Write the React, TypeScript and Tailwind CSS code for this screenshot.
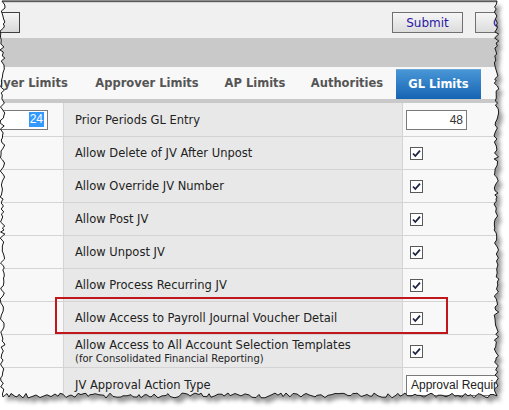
import React from "react";

const rows = [
  { label: "Allow Delete of JV After Unpost" },
  { label: "Allow Override JV Number" },
  { label: "Allow Post JV" },
  { label: "Allow Unpost JV" },
  { label: "Allow Process Recurring JV" },
  { label: "Allow Access to Payroll Journal Voucher Detail" },
];

function Check() {
  return (
    <div className="w-[13px] h-[13px] border border-[#5a5a5a] bg-white flex items-center justify-center">
      <svg width="11" height="11" viewBox="0 0 11 11">
        <path d="M2 5.5 L4.3 8 L9 2.6" fill="none" stroke="#1c2340" strokeWidth="1.8" />
      </svg>
    </div>
  );
}

// jagged torn-paper edge, computed once
function tornPath() {
  let seed = 7;
  const rnd = () => {
    seed = (seed * 9301 + 49297) % 233280;
    return seed / 233280;
  };
  const pts: [number, number][] = [];
  pts.push([2, 1]);
  pts.push([497, 1]);
  for (let y = 4; y < 394; y += 2 + Math.floor(rnd() * 3)) {
    pts.push([494 + rnd() * 5, y]);
  }
  for (let x = 497; x > 2; x -= 2 + Math.floor(rnd() * 3)) {
    pts.push([x, 393 + rnd() * 5]);
  }
  for (let y = 394; y > 2; y -= 2 + Math.floor(rnd() * 3)) {
    pts.push([rnd() * 5, y]);
  }
  return "M" + pts.map((p) => p[0].toFixed(1) + " " + p[1].toFixed(1)).join(" L") + " Z";
}

const edge = tornPath();

const arial = { fontFamily: "Arial, 'Liberation Sans', sans-serif" };

export default function App() {
  const font = { fontFamily: '"DejaVu Sans", Verdana, sans-serif' };
  return (
    <div className="relative w-[509px] h-[410px] bg-white overflow-hidden" style={font}>
      <div className="w-[500px] h-[400px] overflow-hidden">
        {/* top app bar */}
        <div className="h-[1px] bg-[#444]" />
        <div className="h-[1px] bg-[#9a9a9a]" />
        <div className="h-[1px] bg-[#d4d4d4]" />
        <div className="h-[35px] bg-[#f0f0f0] flex items-start pt-[9px]">
          <div className="shrink-0 ml-[-20px] w-[40px] h-[21px] border border-[#404040] bg-gradient-to-b from-[#f6f6f6] to-[#d8d8d8]" />
          <div className="shrink-0 ml-[372px] w-[71px] h-[21px] border border-[#707070] bg-gradient-to-b from-[#f6f6f6] to-[#dcdcdc] flex items-center justify-center text-[12px] text-[#2a17a5]">
            Submit
          </div>
          <div className="shrink-0 ml-[12px] w-[80px] h-[21px] border border-[#707070] bg-gradient-to-b from-[#f6f6f6] to-[#dcdcdc] flex items-center pl-[17px] text-[12px] text-[#2a17a5]">
            Cancel
          </div>
        </div>
        <div className="h-[29px] bg-[#c8c9c8]" />

        {/* tabs */}
        <div className="h-[32px] bg-[#f8f8f8] flex items-end text-[11.5px] font-bold text-[#555]">
          <div className="ml-[-28px] w-[110px] shrink-0 h-[30px] flex items-center justify-center whitespace-nowrap">Buyer Limits</div>
          <div className="w-[130px] shrink-0 h-[30px] flex items-center justify-center">Approver Limits</div>
          <div className="w-[86px] shrink-0 h-[30px] flex items-center justify-center">AP Limits</div>
          <div className="w-[98px] shrink-0 h-[30px] flex items-center justify-center">Authorities</div>
          <div className="w-[85px] shrink-0 h-[30px] flex items-center justify-center text-white bg-gradient-to-b from-[#4896d6] to-[#1464b4] border-t border-[#6aa8dc]">
            GL Limits
          </div>
        </div>
        <div className="h-[4px] bg-[#c8c9c8]" />

        {/* grid rows */}
        <div className="text-[11.5px] text-[#222]">
          <div className="flex h-[33px]">
            <div className="shrink-0 w-[64px] bg-[#f8f8f8] border-r border-[#d4d4d4] flex items-center">
              <div className="ml-[-10px] w-[58px] h-[20px] border border-[#7a7a7a] bg-white flex items-center justify-end pr-[3px]">
                <span className="bg-[#3399ff] text-white text-[12px] leading-[15px] px-[1px]" style={arial}>
                  24
                </span>
              </div>
            </div>
            <div className="shrink-0 w-[339px] bg-[#e8e8e8] border-r border-[#d4d4d4] flex items-center pl-[11px] pt-[2px]">
              Prior Periods GL Entry
            </div>
            <div className="flex-1 bg-[#f8f8f8] flex items-center pl-[3px] pt-[1px]">
              <div
                className="w-[61px] h-[20px] border border-[#7a7a7a] bg-white flex items-center justify-end pr-[3px] text-[12px] text-[#333]"
                style={arial}
              >
                48
              </div>
            </div>
          </div>

          {rows.map((r) => (
            <div key={r.label} className="flex h-[33px] border-t border-[#d4d4d4]">
              <div className="shrink-0 w-[64px] bg-[#f8f8f8] border-r border-[#d4d4d4]" />
              <div className="shrink-0 w-[339px] bg-[#e8e8e8] border-r border-[#d4d4d4] flex items-center pl-[11px] pt-[2px]">
                {r.label}
              </div>
              <div className="flex-1 bg-[#f8f8f8] flex items-center pl-[7px] pt-[1px]">
                <Check />
              </div>
            </div>
          ))}

          <div className="flex h-[33px] border-t border-[#d4d4d4]">
            <div className="shrink-0 w-[64px] bg-[#f8f8f8] border-r border-[#d4d4d4]" />
            <div className="shrink-0 w-[339px] bg-[#e8e8e8] border-r border-[#d4d4d4] flex flex-col justify-center pl-[11px] pt-[2px] leading-[13px]">
              <div>Allow Access to All Account Selection Templates</div>
              <div className="text-[10px] leading-[13px]">(for Consolidated Financial Reporting)</div>
            </div>
            <div className="flex-1 bg-[#f8f8f8] flex items-center pl-[7px] pt-[1px]">
              <Check />
            </div>
          </div>

          <div className="flex h-[33px] border-t border-[#d4d4d4]">
            <div className="shrink-0 w-[64px] bg-[#f8f8f8] border-r border-[#d4d4d4]" />
            <div className="shrink-0 w-[339px] bg-[#e8e8e8] border-r border-[#d4d4d4] flex items-center pl-[11px] pt-[4px]">
              JV Approval Action Type
            </div>
            <div className="flex-1 min-w-0 bg-[#f8f8f8] flex items-center pl-[3px] pt-[2px]">
              <div
                className="w-[120px] shrink-0 h-[21px] border border-[#7a7a7a] bg-white flex items-center pl-[4px] text-[12px] text-[#222] whitespace-nowrap"
                style={arial}
              >
                Approval Required
              </div>
            </div>
          </div>
        </div>
      </div>

      {/* highlight annotation */}
      <div className="absolute left-[55px] top-[297px] w-[393px] h-[37px] border-2 border-[#c0161c]" />

      {/* torn edge overlay */}
      <svg className="absolute inset-0" width="509" height="410" viewBox="0 0 509 410">
        <defs>
          <filter id="blur" x="-10%" y="-10%" width="120%" height="120%">
            <feGaussianBlur stdDeviation="2.2" />
          </filter>
          <mask id="outside">
            <rect width="509" height="410" fill="white" />
            <path d={edge} fill="black" />
          </mask>
        </defs>
        <path d={"M0 0 H509 V410 H0 Z " + edge} fill="white" fillRule="evenodd" />
        <g mask="url(#outside)">
          <path d={edge} transform="translate(4 5)" fill="#000" opacity="0.4" filter="url(#blur)" />
        </g>
        <path d={edge} fill="none" stroke="#1a1a1a" strokeWidth="1" />
      </svg>
    </div>
  );
}
